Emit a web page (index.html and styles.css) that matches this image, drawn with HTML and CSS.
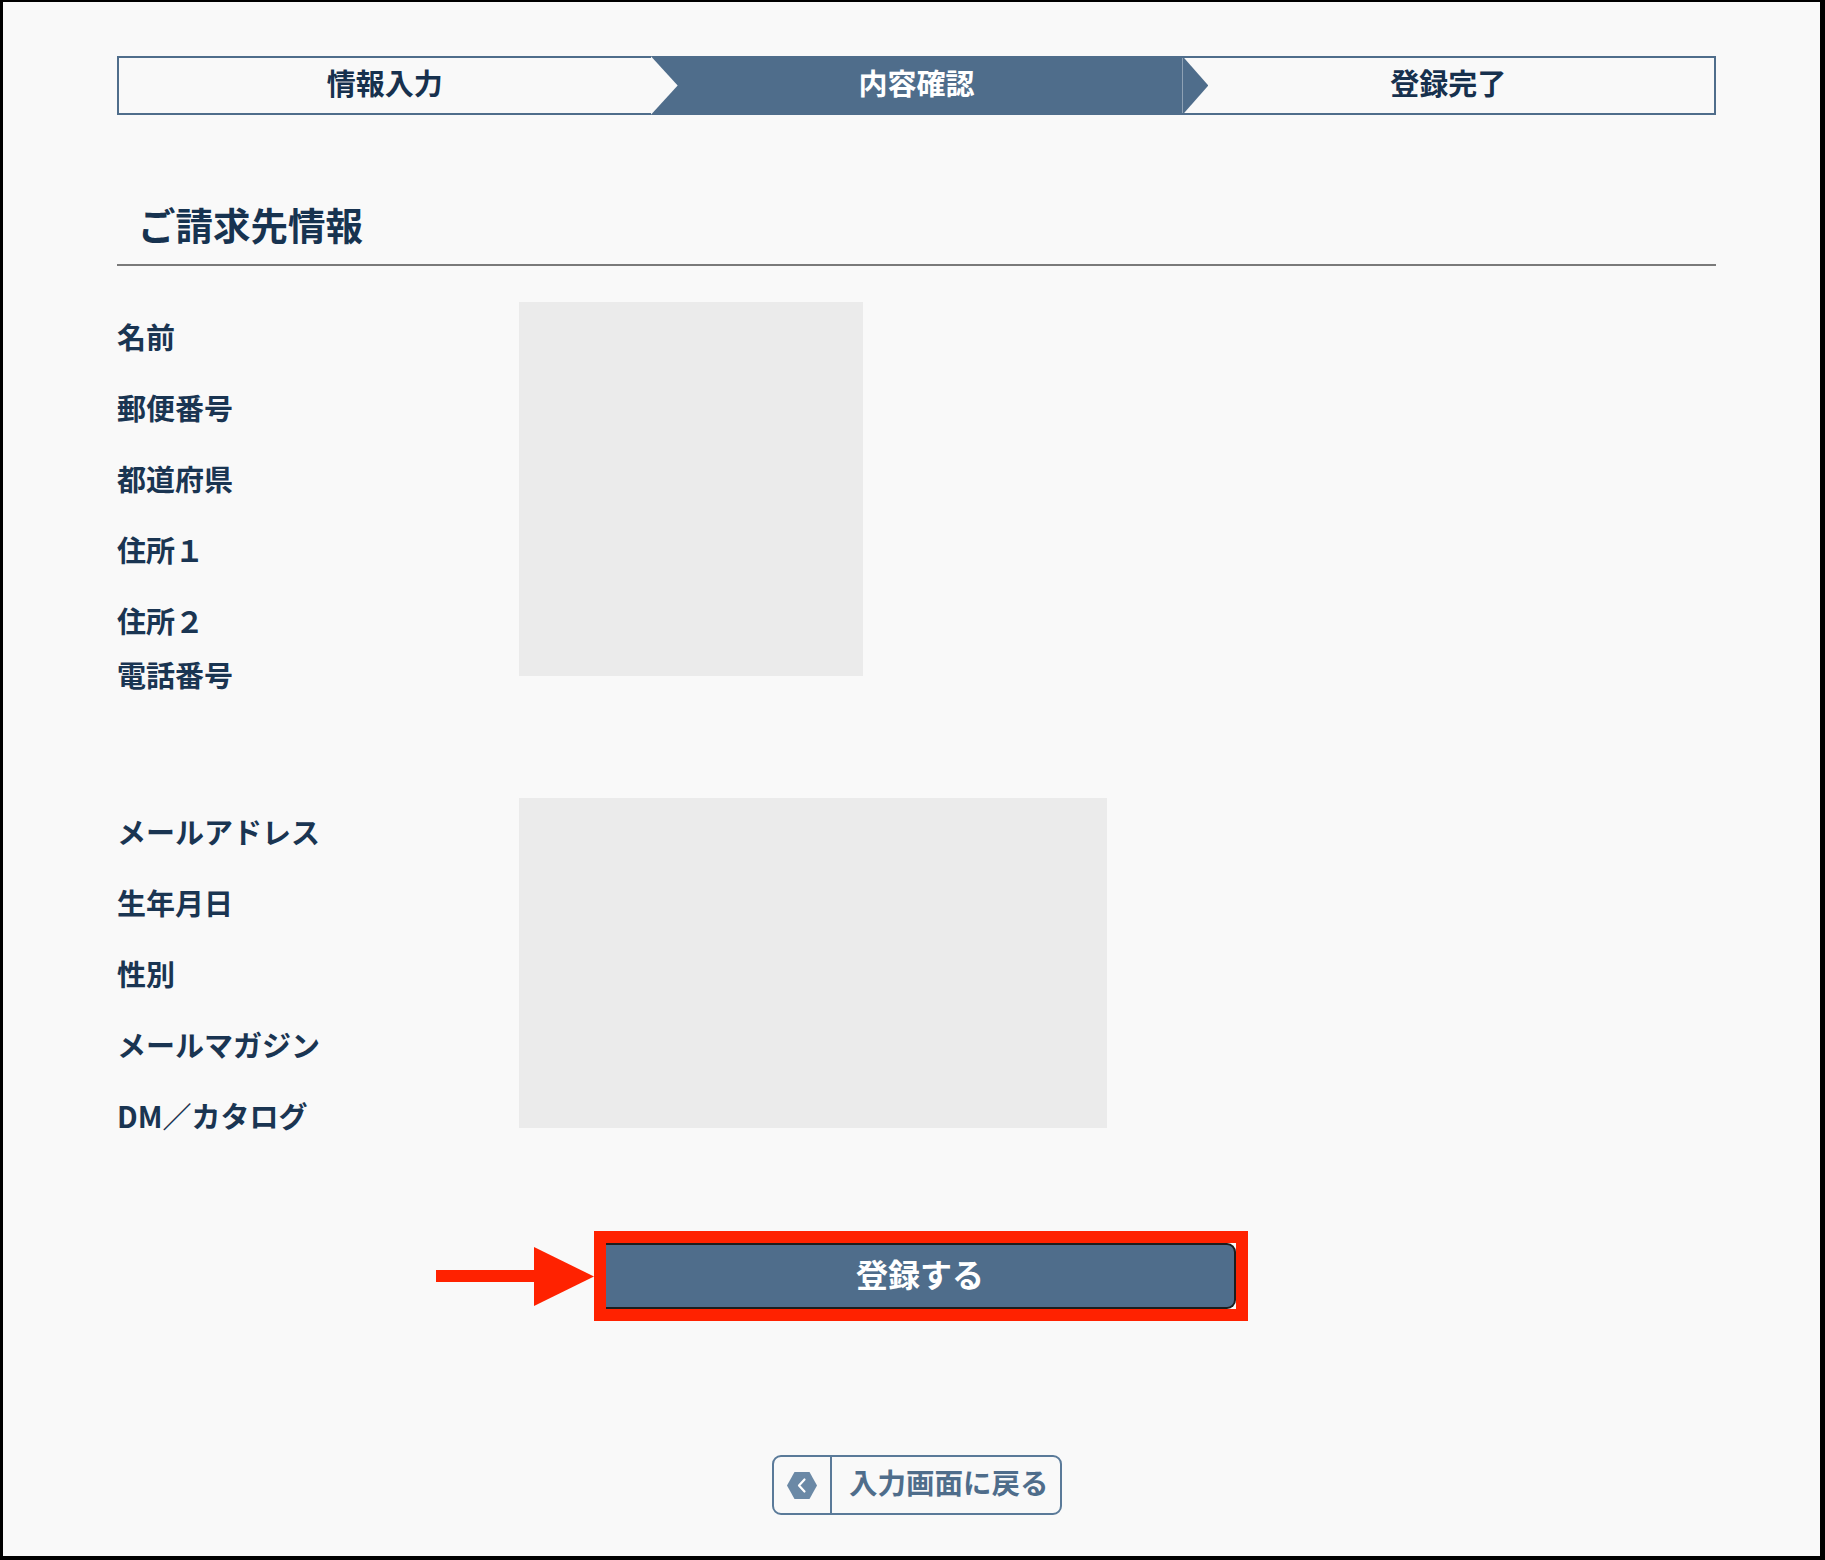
FILE: index.html
```html
<!DOCTYPE html>
<html lang="ja">
<head>
<meta charset="utf-8">
<title>内容確認</title>
<link rel="stylesheet" href="styles.css">
</head>
<body>
<div class="frame">
  <main class="page">
    <ol class="steps">
      <li class="step step--first">情報入力</li>
      <li class="step step--current">内容確認</li>
      <li class="step step--last">登録完了</li>
    </ol>

    <h2 class="section-title">ご請求先情報</h2>

    <div class="info-grid info-grid--billing">
      <div class="info-label">名前</div>
      <div class="info-label">郵便番号</div>
      <div class="info-label">都道府県</div>
      <div class="info-label">住所１</div>
      <div class="info-label info-label--short">住所２</div>
      <div class="info-label info-label--last">電話番号</div>
      <div class="redaction redaction--billing"></div>
    </div>

    <div class="info-grid info-grid--account">
      <div class="info-label">メールアドレス</div>
      <div class="info-label">生年月日</div>
      <div class="info-label">性別</div>
      <div class="info-label">メールマガジン</div>
      <div class="info-label info-label--last">DM／カタログ</div>
      <div class="redaction redaction--account"></div>
    </div>

    <div class="submit-row">
      <div class="highlight">
        <svg class="pointer" viewBox="0 0 158 59" width="158" height="59" aria-hidden="true">
          <rect x="0" y="23" width="100" height="12" fill="#ff2200"/>
          <polygon points="98,0 158,29.5 98,59" fill="#ff2200"/>
        </svg>
        <button class="submit-btn" type="button">登録する</button>
      </div>
    </div>

    <div class="back-row">
      <a class="back-btn" href="#">
        <span class="back-icon">
          <svg viewBox="0 0 30 27" width="30" height="27" aria-hidden="true">
            <polygon points="7.5,0 22.5,0 30,13.5 22.5,27 7.5,27 0,13.5" fill="#6b89a6"/>
            <polyline points="17.5,7.5 12,13.5 17.5,19.5" fill="none" stroke="#ffffff" stroke-width="2.2" stroke-linecap="round" stroke-linejoin="round"/>
          </svg>
        </span>
        <span class="back-text">入力画面に戻る</span>
      </a>
    </div>
  </main>
</div>
</body>
</html>
```

FILE: styles.css
```css
* {
  box-sizing: border-box;
}

html, body {
  margin: 0;
  padding: 0;
  background: #f9f9f9;
}

body {
  font-family: "Noto Sans CJK JP", "Noto Sans", sans-serif;
  font-weight: 700;
  color: #1a3552;
}

.frame {
  width: 1825px;
  height: 1560px;
  border-style: solid;
  border-color: #000;
  border-width: 2px 5px 4px 3px;
  background: #f9f9f9;
  overflow: hidden;
}

.page {
  margin-left: 114px;
  width: 1599px;
  padding-top: 54px;
}

/* Steps */
.steps {
  list-style: none;
  margin: 0;
  padding: 0;
  display: flex;
  height: 59px;
}

.step {
  flex: 1 1 0;
  display: flex;
  align-items: center;
  justify-content: center;
  border-top: 2px solid #4f6d8b;
  border-bottom: 2px solid #4f6d8b;
  background: #f9f9f9;
  font-size: 29px;
  line-height: 1;
  color: #17314e;
  padding-bottom: 6px;
}

.step--first {
  border-left: 2px solid #4f6d8b;
}

.step--last {
  border-right: 2px solid #4f6d8b;
}

.step--current {
  position: relative;
  background: #4f6d8b;
  color: #ffffff;
  border: none;
}

.step--current::before {
  content: "";
  position: absolute;
  left: 0;
  top: 0;
  width: 27px;
  height: 100%;
  background: #f9f9f9;
  clip-path: polygon(0 0, 100% 50%, 0 100%);
}

.step--current::after {
  content: "";
  position: absolute;
  left: 100%;
  top: 0;
  width: 26px;
  height: 100%;
  background: #4f6d8b;
  clip-path: polygon(0 0, 100% 50%, 0 100%);
}

/* Section title */
.section-title {
  margin: 84px 0 0;
  padding: 0 0 15px 21px;
  font-size: 37.5px;
  line-height: 50px;
  font-weight: 700;
  color: #173350;
  border-bottom: 2px solid #7a7a7a;
}

/* Info grids */
.info-grid {
  display: grid;
  align-items: start;
}

.info-grid--billing {
  margin-top: 50px;
  grid-template-columns: 402px 344px;
  grid-template-rows: repeat(6, auto);
}

.info-grid--account {
  margin-top: 117px;
  grid-template-columns: 402px 588px;
  grid-template-rows: repeat(5, auto);
}

.info-label {
  grid-column: 1;
  font-size: 29px;
  line-height: 40px;
  margin-bottom: 31px;
  white-space: nowrap;
}

.info-label--short {
  margin-bottom: 14px;
}

.info-label--last {
  margin-bottom: 0;
}

.redaction {
  grid-column: 2;
  grid-row: 1 / -1;
  background: #ebebeb;
}

.redaction--billing {
  margin-top: -14px;
  height: 374px;
}

.redaction--account {
  margin-top: -13px;
  height: 330px;
}

/* Submit */
.submit-row {
  margin-top: 96px;
  display: flex;
}

.highlight {
  position: relative;
  margin-left: 477px;
  border: 12px solid #ff2200;
  background: #f9f9f9;
}

.pointer {
  position: absolute;
  left: -170px;
  top: 4px;
  display: block;
}

.submit-btn {
  display: flex;
  align-items: center;
  justify-content: center;
  width: 630px;
  height: 66px;
  margin: 0;
  padding: 0 0 6px;
  background: #4f6d8b;
  color: #ffffff;
  font-family: "Noto Sans CJK JP", "Noto Sans", sans-serif;
  font-weight: 700;
  font-size: 32px;
  line-height: 1;
  border: 2px solid #1c1c1c;
  border-left: none;
  border-radius: 0 9px 9px 0;
  cursor: pointer;
}

/* Back */
.back-row {
  margin-top: 134px;
  display: flex;
}

.back-btn {
  margin-left: 655px;
  display: flex;
  width: 290px;
  height: 60px;
  border: 2px solid #5a7a99;
  border-radius: 9px;
  text-decoration: none;
  color: #4f6d8b;
  background: #f9f9f9;
}

.back-icon {
  width: 58px;
  flex: 0 0 58px;
  display: flex;
  align-items: center;
  justify-content: center;
  border-right: 2px solid #5a7a99;
}

.back-icon svg {
  display: block;
}

.back-text {
  display: flex;
  align-items: center;
  padding-left: 17px;
  padding-bottom: 5px;
  font-size: 28.5px;
  line-height: 1;
  white-space: nowrap;
}
```
